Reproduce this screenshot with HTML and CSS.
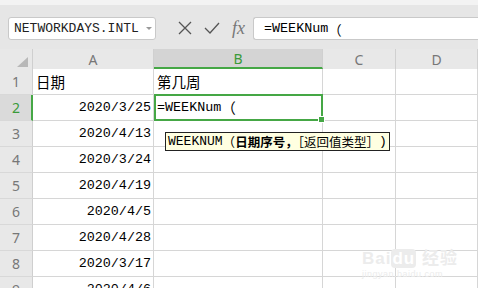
FILE: index.html
```html
<!DOCTYPE html>
<html lang="zh-CN">
<head>
    <meta charset="UTF-8">
    <title>WEEKNUM</title>
    <link rel="stylesheet" href="styles.css">
</head>
<body>
    <!-- formula bar -->
    <div class="toolbar">
        <div class="name-box">
            <span>NETWORKDAYS.INTL</span>
            <span class="caret"></span>
        </div>
        <div class="bar-icons">
            <svg width="14" height="14" viewBox="0 0 14 14"><path d="M1 1 L13 13 M13 1 L1 13" stroke="#555" stroke-width="1.3" fill="none"/></svg>
            <svg width="16" height="14" viewBox="0 0 16 14"><path d="M1 7 L6 12 L15 2" stroke="#555" stroke-width="1.3" fill="none"/></svg>
            <span class="fx">fx</span>
        </div>
        <div class="formula-box">=WEEKNum<span class="cjk">（</span></div>
    </div>

    <!-- sheet -->
    <div class="sheet">
        <div class="corner"><span class="tri"></span></div>
        <div class="col-head">A</div>
        <div class="col-head active">B</div>
        <div class="col-head">C</div>
        <div class="col-head">D</div>

        <div class="row-head">1</div>
        <div class="cell"><span class="cjk">日期</span></div>
        <div class="cell"><span class="cjk">第几周</span></div>
        <div class="cell"></div>
        <div class="cell"></div>

        <div class="row-head active">2</div>
        <div class="cell num">2020/3/25</div>
        <div class="cell editing">=WEEKNum<span class="cjk">（</span><span class="handle"></span>
            <div class="tip">WEEKNUM<span class="cjk">（<b>日期序号，</b>［返回值类型］</span>)</div>
        </div>
        <div class="cell"></div>
        <div class="cell"></div>

        <div class="row-head">3</div>
        <div class="cell num">2020/4/13</div>
        <div class="cell"></div>
        <div class="cell"></div>
        <div class="cell"></div>

        <div class="row-head">4</div>
        <div class="cell num">2020/3/24</div>
        <div class="cell"></div>
        <div class="cell"></div>
        <div class="cell"></div>

        <div class="row-head">5</div>
        <div class="cell num">2020/4/19</div>
        <div class="cell"></div>
        <div class="cell"></div>
        <div class="cell"></div>

        <div class="row-head">6</div>
        <div class="cell num">2020/4/5</div>
        <div class="cell"></div>
        <div class="cell"></div>
        <div class="cell"></div>

        <div class="row-head">7</div>
        <div class="cell num">2020/4/28</div>
        <div class="cell"></div>
        <div class="cell"></div>
        <div class="cell"></div>

        <div class="row-head">8</div>
        <div class="cell num">2020/3/17</div>
        <div class="cell"></div>
        <div class="cell"></div>
        <div class="cell"></div>

        <div class="row-head">9</div>
        <div class="cell num">2020/4/6</div>
        <div class="cell"></div>
        <div class="cell"></div>
        <div class="cell"></div>
    </div>

    <div class="watermark">
        <div class="wm-logo">Bai<span class="wm-du">du</span> <span class="cjk">经验</span></div>
        <div class="wm-url">jingyan.baidu.com</div>
    </div>
</body>
</html>
```

FILE: styles.css
```css
body {
    margin: 0;
    width: 478px;
    height: 288px;
    overflow: hidden;
    background: #fff;
    font-family: "Liberation Mono", "Noto Sans CJK SC", monospace;
    font-size: 13.4px;
    color: #000;
    position: relative;
}

.cjk {
    font-family: "Noto Sans CJK SC", sans-serif;
}

/* formula bar */
.toolbar {
    height: 44px;
    border-top: 5px solid #f3f3f3;
    background: #e6e6e6;
    display: flex;
    align-items: flex-start;
}

.name-box {
    margin: 12px 0 0 8px;
    width: 148px;
    height: 23px;
    box-sizing: border-box;
    background: #fff;
    border: 1px solid #c9c9c9;
    border-radius: 3px;
    display: flex;
    align-items: center;
    padding-left: 5px;
    color: #222;
    font-size: 13px;
}

.caret {
    margin-left: auto;
    margin-right: 3px;
    border-left: 3px solid transparent;
    border-right: 3px solid transparent;
    border-top: 3px solid #999;
}

.bar-icons {
    display: flex;
    align-items: center;
    gap: 12px;
    margin: 16px 0 0 22px;
    height: 14px;
}

.fx {
    font-family: "Liberation Serif", serif;
    font-style: italic;
    font-size: 18px;
    color: #777;
}

.formula-box {
    margin: 12px 0 0 8px;
    flex: 1;
    height: 23px;
    box-sizing: border-box;
    background: #fff;
    border: 1px solid #c9c9c9;
    border-right: none;
    border-radius: 3px 0 0 3px;
    display: flex;
    align-items: center;
    padding-left: 10px;
}

/* sheet */
.sheet {
    display: grid;
    grid-template-columns: 33px 121px 169px 73px 1fr;
    grid-template-rows: 20px repeat(9, 26px);
}

.corner, .col-head, .row-head {
    background: #e8e8e8;
    box-sizing: border-box;
    color: #777;
    font-family: "Noto Sans", sans-serif;
    font-size: 14px;
    display: flex;
    align-items: center;
    justify-content: center;
}

.corner {
    border-right: 1px solid #cfcfcf;
    justify-content: flex-end;
    align-items: flex-end;
    padding: 0 4px 2px 0;
}

.tri {
    width: 0;
    height: 0;
    border-left: 11px solid transparent;
    border-bottom: 10px solid #b8b8b8;
}

.col-head {
    border-right: 1px solid #d0d0d0;
}

.col-head.active {
    background: #d4d4d4;
    color: #3a9a3a;
    border-bottom: 2px solid #45a745;
}

.row-head {
    border-right: 1px solid #cfcfcf;
    border-bottom: 1px solid #d8d8d8;
    justify-content: flex-start;
    padding-left: 12px;
}

.row-head.active {
    background: #dadada;
    color: #3a9a3a;
    border-right: 2px solid #45a745;
}

.cell {
    box-sizing: border-box;
    border-right: 1px solid #d6d6d6;
    border-bottom: 1px solid #d6d6d6;
    display: flex;
    align-items: center;
    padding: 0 3px;
    white-space: nowrap;
}

.cell .cjk {
    font-size: 14.5px;
}

.num {
    justify-content: flex-end;
    padding-right: 2px;
}

.editing {
    position: relative;
    border: 2px solid #45a745;
    margin: -1px 0 0 0;
    padding-left: 1px;
    z-index: 2;
}

.handle {
    position: absolute;
    right: -4px;
    bottom: -4px;
    width: 5px;
    height: 5px;
    background: #45a745;
    border: 1px solid #fff;
}

.tip {
    position: absolute;
    left: 9px;
    top: 36px;
    height: 19px;
    box-sizing: border-box;
    padding: 0 2px;
    background: #ffffe1;
    border: 1px solid #222;
    font-size: 13px;
    display: flex;
    align-items: center;
    white-space: nowrap;
}

.tip .cjk {
    font-size: 12.5px;
}

.tip b {
    font-weight: 700;
}

.watermark {
    position: absolute;
    left: 362px;
    top: 244px;
    color: #ececec;
    font-family: "Liberation Sans", sans-serif;
}

.wm-logo {
    font-size: 17px;
    font-weight: bold;
    letter-spacing: 1px;
}

.wm-du {
    background: #ececec;
    color: #fff;
    border-radius: 4px;
    padding: 0 1px;
}

.wm-url {
    font-size: 9px;
    letter-spacing: 0.5px;
}
```
